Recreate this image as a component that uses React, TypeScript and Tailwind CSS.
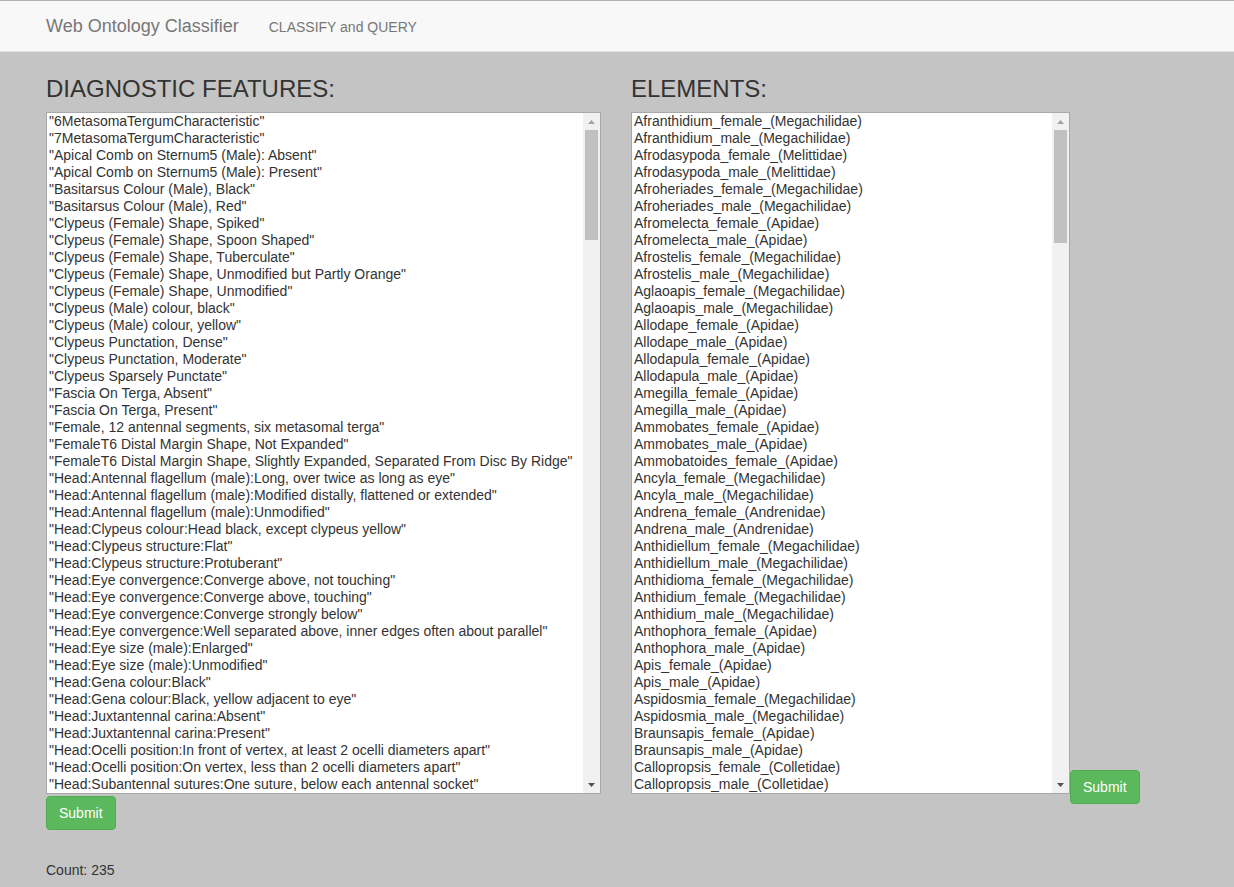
import React from "react";

const features = [
  '"6MetasomaTergumCharacteristic"',
  '"7MetasomaTergumCharacteristic"',
  '"Apical Comb on Sternum5 (Male): Absent"',
  '"Apical Comb on Sternum5 (Male): Present"',
  '"Basitarsus Colour (Male), Black"',
  '"Basitarsus Colour (Male), Red"',
  '"Clypeus (Female) Shape, Spiked"',
  '"Clypeus (Female) Shape, Spoon Shaped"',
  '"Clypeus (Female) Shape, Tuberculate"',
  '"Clypeus (Female) Shape, Unmodified but Partly Orange"',
  '"Clypeus (Female) Shape, Unmodified"',
  '"Clypeus (Male) colour, black"',
  '"Clypeus (Male) colour, yellow"',
  '"Clypeus Punctation, Dense"',
  '"Clypeus Punctation, Moderate"',
  '"Clypeus Sparsely Punctate"',
  '"Fascia On Terga, Absent"',
  '"Fascia On Terga, Present"',
  '"Female, 12 antennal segments, six metasomal terga"',
  '"FemaleT6 Distal Margin Shape, Not Expanded"',
  '"FemaleT6 Distal Margin Shape, Slightly Expanded, Separated From Disc By Ridge"',
  '"Head:Antennal flagellum (male):Long, over twice as long as eye"',
  '"Head:Antennal flagellum (male):Modified distally, flattened or extended"',
  '"Head:Antennal flagellum (male):Unmodified"',
  '"Head:Clypeus colour:Head black, except clypeus yellow"',
  '"Head:Clypeus structure:Flat"',
  '"Head:Clypeus structure:Protuberant"',
  '"Head:Eye convergence:Converge above, not touching"',
  '"Head:Eye convergence:Converge above, touching"',
  '"Head:Eye convergence:Converge strongly below"',
  '"Head:Eye convergence:Well separated above, inner edges often about parallel"',
  '"Head:Eye size (male):Enlarged"',
  '"Head:Eye size (male):Unmodified"',
  '"Head:Gena colour:Black"',
  '"Head:Gena colour:Black, yellow adjacent to eye"',
  '"Head:Juxtantennal carina:Absent"',
  '"Head:Juxtantennal carina:Present"',
  '"Head:Ocelli position:In front of vertex, at least 2 ocelli diameters apart"',
  '"Head:Ocelli position:On vertex, less than 2 ocelli diameters apart"',
  '"Head:Subantennal sutures:One suture, below each antennal socket"',
];

const elements = [
  "Afranthidium_female_(Megachilidae)",
  "Afranthidium_male_(Megachilidae)",
  "Afrodasypoda_female_(Melittidae)",
  "Afrodasypoda_male_(Melittidae)",
  "Afroheriades_female_(Megachilidae)",
  "Afroheriades_male_(Megachilidae)",
  "Afromelecta_female_(Apidae)",
  "Afromelecta_male_(Apidae)",
  "Afrostelis_female_(Megachilidae)",
  "Afrostelis_male_(Megachilidae)",
  "Aglaoapis_female_(Megachilidae)",
  "Aglaoapis_male_(Megachilidae)",
  "Allodape_female_(Apidae)",
  "Allodape_male_(Apidae)",
  "Allodapula_female_(Apidae)",
  "Allodapula_male_(Apidae)",
  "Amegilla_female_(Apidae)",
  "Amegilla_male_(Apidae)",
  "Ammobates_female_(Apidae)",
  "Ammobates_male_(Apidae)",
  "Ammobatoides_female_(Apidae)",
  "Ancyla_female_(Megachilidae)",
  "Ancyla_male_(Megachilidae)",
  "Andrena_female_(Andrenidae)",
  "Andrena_male_(Andrenidae)",
  "Anthidiellum_female_(Megachilidae)",
  "Anthidiellum_male_(Megachilidae)",
  "Anthidioma_female_(Megachilidae)",
  "Anthidium_female_(Megachilidae)",
  "Anthidium_male_(Megachilidae)",
  "Anthophora_female_(Apidae)",
  "Anthophora_male_(Apidae)",
  "Apis_female_(Apidae)",
  "Apis_male_(Apidae)",
  "Aspidosmia_female_(Megachilidae)",
  "Aspidosmia_male_(Megachilidae)",
  "Braunsapis_female_(Apidae)",
  "Braunsapis_male_(Apidae)",
  "Callopropsis_female_(Colletidae)",
  "Callopropsis_male_(Colletidae)",
];

function Scrollbar({ thumbHeight }: { thumbHeight: number }) {
  return (
    <div className="flex w-[17px] shrink-0 flex-col bg-[#f1f1f1]">
      <div className="flex h-[17px] items-center justify-center">
        <svg width="7" height="4" viewBox="0 0 7 4">
          <polygon points="0,4 7,4 3.5,0" fill="#a3a3a3" />
        </svg>
      </div>
      <div className="flex-1 px-[2px]">
        <div className="w-full bg-[#c1c1c1]" style={{ height: thumbHeight }} />
      </div>
      <div className="flex h-[17px] items-center justify-center">
        <svg width="7" height="4" viewBox="0 0 7 4">
          <polygon points="0,0 7,0 3.5,4" fill="#505050" />
        </svg>
      </div>
    </div>
  );
}

function ListBox({ items, widthClass, thumbHeight }: { items: string[]; widthClass: string; thumbHeight: number }) {
  return (
    <div className={`flex h-[682px] border border-[#a9a9a9] bg-white ${widthClass}`}>
      <div className="flex-1 overflow-hidden text-[14px] leading-[17px] text-[#333]">
        {items.map((t, i) => (
          <div key={i} className="h-[17px] whitespace-nowrap px-[2px]">
            {t}
          </div>
        ))}
      </div>
      <Scrollbar thumbHeight={thumbHeight} />
    </div>
  );
}

function SubmitButton() {
  return (
    <button className="h-[34px] rounded-[4px] border border-[#4cae4c] bg-[#5cb85c] px-[12px] text-[14px] leading-[20px] text-white">
      Submit
    </button>
  );
}

export default function App() {
  return (
    <div
      className="min-h-[887px] bg-[#c4c4c4] text-[#333]"
      style={{ fontFamily: '"Liberation Sans", Arial, sans-serif' }}
    >
      <nav className="flex h-[52px] items-center border-t border-b border-t-[#b0b0b0] border-b-[#e3e3e3] bg-[#f8f8f8] pl-[46px]">
        <span className="text-[18px] leading-[20px] text-[#777]">Web Ontology Classifier</span>
        <span className="ml-[30px] pt-[1px] text-[14px] leading-[20px] text-[#777]">CLASSIFY and QUERY</span>
      </nav>
      <main className="pl-[46px] pt-[24px]">
        <div className="flex gap-[30px]">
          <div className="w-[555px]">
            <h3 className="mb-[10px] text-[24px] leading-[26px] text-[#333]">DIAGNOSTIC FEATURES:</h3>
            <ListBox items={features} widthClass="w-[555px]" thumbHeight={110} />
            <div className="mt-[2px]">
              <SubmitButton />
            </div>
          </div>
          <div>
            <h3 className="mb-[10px] text-[24px] leading-[26px] text-[#333]">ELEMENTS:</h3>
            <div className="flex items-end">
              <ListBox items={elements} widthClass="w-[439px]" thumbHeight={113} />
              <div className="mb-[-10px]">
                <SubmitButton />
              </div>
            </div>
          </div>
        </div>
        <div className="mt-[30px] text-[14px] leading-[20px] text-[#333]">Count: 235</div>
      </main>
    </div>
  );
}
